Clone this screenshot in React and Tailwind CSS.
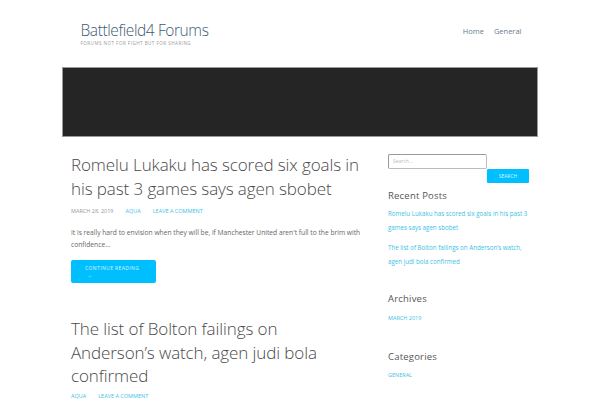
export default function App() {
  return (
    <div className="h-[400px] w-[600px] overflow-hidden bg-white font-['Open_Sans',sans-serif] text-[#444]">
      <header className="mx-auto flex h-[67px] w-[475px] items-start justify-between pt-[21px]">
        <div className="pl-[18px]">
          <div className="text-[15.5px] font-light leading-[18px] tracking-[-0.4px] text-[#3d5a73]">Battlefield4 Forums</div>
          <div className="mt-[1px] text-[4.5px] uppercase leading-[6px] tracking-[0.5px] text-[#999]">Forums not for fight but for sharing</div>
        </div>
        <nav className="flex gap-[10px] pr-[16px] pt-[5px] text-[7.5px] leading-[10px] text-[#6b7d8c]">
          <span>Home</span>
          <span>General</span>
        </nav>
      </header>

      <div className="mx-auto h-[70px] w-[476px] border border-[#999] bg-[#252525]" />

      <div className="mx-auto flex w-[476px] pt-[16px]">
        <main className="w-[316px] pl-[9px] pr-[13px]">
          <article>
            <h2 className="text-[17px] font-light leading-[24px] tracking-[-0.1px] text-[#4a4a4a]">
              Romelu Lukaku has scored six goals in his past 3 games says agen sbobet
            </h2>
            <div className="mt-[6px] flex gap-[12px] text-[5.5px] uppercase leading-[8px] text-[#999]">
              <span>March 28, 2019</span>
              <span className="text-[#3cbfe6]">Aqua</span>
              <span className="text-[#3cbfe6]">Leave a comment</span>
            </div>
            <p className="mt-[12px] text-[6.7px] leading-[12px] text-[#666]">
              It is really hard to envision when they will be, if Manchester United aren't full to the brim with confidence…
            </p>
            <button className="mt-[9px] flex h-[23px] w-[85px] flex-col items-start rounded-[2px] bg-[#00bfff] px-[14px] pt-[5px] text-left text-[5px] uppercase leading-[7px] tracking-[0.4px] text-[#d8f4ff]">
              <span>Continue reading</span>
              <span className="pl-[2px]">→</span>
            </button>
          </article>

          <article className="mt-[34px]">
            <h2 className="text-[17px] font-light leading-[23.5px] tracking-[-0.1px] text-[#4a4a4a]">
              The list of Bolton failings on Anderson’s watch, agen judi bola confirmed
            </h2>
            <div className="mt-[4.5px] flex gap-[12px] text-[5.5px] uppercase leading-[8px] text-[#3cbfe6]">
              <span>Aqua</span>
              <span>Leave a comment</span>
            </div>
          </article>
        </main>

        <aside className="w-[152px] pl-[10px] pt-[1px]">
          <div className="flex flex-col items-start">
            <div className="h-[15px] w-[99px] rounded-[2px] border border-[#bbb] border-l-[#999] border-t-[#999] px-[4px] text-[5px] leading-[12px] text-[#bbb]">Search…</div>
            <button className="ml-[99px] h-[14px] w-[42px] rounded-[1px] bg-[#00bfff] text-[5px] uppercase leading-[14px] text-[#d8f4ff]">Search</button>
          </div>
          <h3 className="mt-[6px] text-[9.5px] leading-[14px] tracking-[0.2px] text-[#555]">Recent Posts</h3>
          <ul className="mt-[4px] w-[142px] text-[6.2px] leading-[13.5px] text-[#3cbfe6]">
            <li>Romelu Lukaku has scored six goals in his past 3 games says agen sbobet</li>
            <li className="mt-[7px]">The list of Bolton failings on Anderson’s watch, agen judi bola confirmed</li>
          </ul>
          <h3 className="mt-[24px] text-[9.5px] leading-[14px] tracking-[0.2px] text-[#555]">Archives</h3>
          <div className="mt-[8px] text-[5.5px] uppercase leading-[8px] text-[#3cbfe6]">March 2019</div>
          <h3 className="mt-[28px] text-[9.5px] leading-[14px] tracking-[0.2px] text-[#555]">Categories</h3>
          <div className="mt-[7px] text-[5.5px] uppercase leading-[8px] text-[#3cbfe6]">General</div>
        </aside>
      </div>
    </div>
  );
}
